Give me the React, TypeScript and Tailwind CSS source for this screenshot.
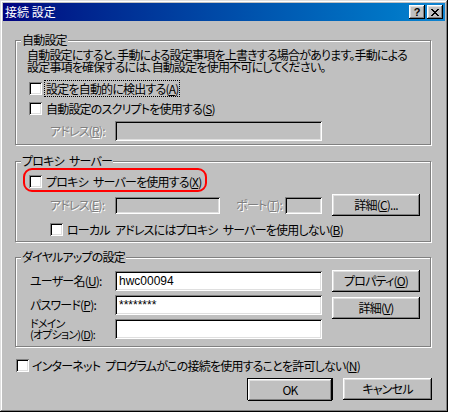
import React from 'react';

const raised =
  'shadow-[inset_-1px_-1px_#000,inset_1px_1px_#fff,inset_-2px_-2px_#808080,inset_2px_2px_#dfdfdf]';
const sunken =
  'shadow-[inset_1px_1px_#808080,inset_-1px_-1px_#fff,inset_2px_2px_#000,inset_-2px_-2px_#dfdfdf]';
const etched = 'border border-[#808080] shadow-[inset_1px_1px_#fff,1px_1px_#fff]';
const dim = 'text-[#808080] [text-shadow:1px_1px_#fff]';
const sp = '\u2002';

// mnemonic like (A) with underlined letter
const K = ({ k }: { k: string }) => (
  <>
    (<span className="underline underline-offset-[1px]">{k}</span>)
  </>
);

const Box = () => <span className={`block w-[13px] h-[13px] shrink-0 bg-white ${sunken}`} />;

const Btn = ({ children, className = '' }: { children: React.ReactNode; className?: string }) => (
  <button className={`h-[22px] shrink-0 bg-[#c0c0c0] ${raised} leading-[22px] text-center ${className}`}>
    {children}
  </button>
);

const Group = ({ title, className = '', children }: { title: string; className?: string; children: React.ReactNode }) => (
  <fieldset className={`w-[416px] ${etched} ${className}`}>
    <legend className="ml-[5px] px-[1px] leading-[14px] bg-[#c0c0c0]">{title}</legend>
    {children}
  </fieldset>
);

export default function App() {
  return (
    <div className="w-[455px] h-[420px] bg-white font-['Noto_Sans_CJK_JP','Noto_Sans_CJK_SC',sans-serif] [font-feature-settings:'palt'] text-[12px] tracking-[-0.8px] text-black">
      <div className="w-[448px] h-[412px] bg-[#c0c0c0] p-[3px] shadow-[inset_-1px_-1px_#000,inset_1px_1px_#dfdfdf,inset_-2px_-2px_#808080,inset_2px_2px_#fff]">
        {/* title bar */}
        <div className="h-[18px] flex items-center bg-gradient-to-r from-[#000080] to-[#1084d0] pl-[2px] pr-[2px]">
          <span className="text-white text-[12px] leading-[18px] tracking-normal whitespace-nowrap">接続 設定</span>
          <div className="ml-auto flex gap-[2px]">
            <span className={`w-[16px] h-[14px] bg-[#c0c0c0] ${raised} flex items-center justify-center text-[11px] font-bold leading-none tracking-normal font-['Liberation_Sans',sans-serif]`}>
              ?
            </span>
            <span className={`w-[16px] h-[14px] bg-[#c0c0c0] ${raised} flex items-center justify-center`}>
              <svg width="8" height="7" viewBox="0 0 8 7" shapeRendering="crispEdges">
                <path d="M0 0h2v1h-2zM6 0h2v1h-2zM1 1h2v1h-2zM5 1h2v1h-2zM2 2h4v1h-4zM3 3h2v1h-2zM2 4h4v1h-4zM1 5h2v1h-2zM5 5h2v1h-2zM0 6h2v1h-2zM6 6h2v1h-2z" fill="#000" />
              </svg>
            </span>
          </div>
        </div>

        <div className="pl-[12px]">
          {/* 自動設定 */}
          <Group title="自動設定" className="mt-[12px]">
            <div className="pb-[3px]">
              <p className="ml-[11px] mt-[2px] leading-[12px] whitespace-nowrap">
                自動設定にすると、手動による設定事項を上書きする場合があります。手動による
                <br />
                設定事項を確保するには、自動設定を使用不可にしてください。
              </p>
              <div className="mt-[7px] ml-[13px] flex items-center h-[17px]">
                <Box />
                <span className="ml-[3px] px-[1px] leading-[15px] outline outline-1 outline-dotted outline-black whitespace-nowrap">
                  設定を自動的に検出する<K k="A" />
                </span>
              </div>
              <div className="mt-[3px] ml-[13px] flex items-center h-[17px]">
                <Box />
                <span className="ml-[4px] whitespace-nowrap">
                  自動設定のスクリプトを使用する<K k="S" />
                </span>
              </div>
              <div className="mt-[4px] flex items-center h-[20px]">
                <span className={`ml-[34px] w-[65px] shrink-0 whitespace-nowrap ${dim}`}>
                  アドレス<K k="R" />:
                </span>
                <div className={`w-[207px] h-[20px] ${sunken}`} />
              </div>
            </div>
          </Group>

          {/* プロキシ サーバー */}
          <Group title={`プロキシ${sp}サーバー`} className="mt-[9px]">
            <div className="pb-[3px]">
              <div className="ml-[7px] w-[184px] h-[24px] flex items-center border-2 border-[#ff0000] rounded-[9px] pl-[4px] pt-[3px]">
                <Box />
                <span className="ml-[4px] whitespace-nowrap">
                  プロキシ{sp}サーバーを使用する<K k="X" />
                </span>
              </div>
              <div className="mt-[2px] flex items-center h-[22px]">
                <span className={`ml-[34px] w-[65px] shrink-0 whitespace-nowrap ${dim}`}>
                  アドレス<K k="E" />:
                </span>
                <div className={`w-[105px] h-[17px] shrink-0 ${sunken}`} />
                <div className="w-[65px] shrink-0 flex justify-end pr-[3px]">
                  <span className={`whitespace-nowrap ${dim}`}>
                    ポート<K k="T" />:
                  </span>
                </div>
                <div className={`w-[37px] h-[17px] shrink-0 ${sunken}`} />
                <Btn className="ml-[10px] w-[88px]">
                  詳細<K k="C" />...
                </Btn>
              </div>
              <div className="mt-[5px] ml-[34px] flex items-center h-[17px]">
                <Box />
                <span className="ml-[4px] whitespace-nowrap">
                  ローカル{sp}アドレスにはプロキシ{sp}サーバーを使用しない<K k="B" />
                </span>
              </div>
            </div>
          </Group>

          {/* ダイヤルアップの設定 */}
          <Group title="ダイヤルアップの設定" className="mt-[8px]">
            <div className="mt-[6px] pb-[7px] flex">
              <div className="ml-[14px] pt-[1px] flex flex-col gap-[4px]">
                <div className="flex items-center h-[20px]">
                  <span className="w-[85px] shrink-0 whitespace-nowrap">
                    ユーザー名<K k="U" />:
                  </span>
                  <div className={`w-[207px] h-[20px] bg-white ${sunken} pl-[4px] leading-[20px] tracking-normal font-['Liberation_Sans',sans-serif] text-[12px]`}>
                    hwc00094
                  </div>
                </div>
                <div className="flex items-center h-[20px]">
                  <span className="w-[85px] shrink-0 whitespace-nowrap">
                    パスワード<K k="P" />:
                  </span>
                  <div className={`w-[207px] h-[20px] bg-white ${sunken} pl-[4px] leading-[20px] tracking-normal font-['Liberation_Sans',sans-serif] text-[12px]`}>
                    ********
                  </div>
                </div>
                <div className="flex items-center h-[20px]">
                  <span className="w-[85px] shrink-0 whitespace-nowrap text-[11px] leading-[11px]">
                    ドメイン
                    <br />
                    (オプション)<K k="D" />:
                  </span>
                  <div className={`w-[207px] h-[20px] bg-white ${sunken}`} />
                </div>
              </div>
              <div className="ml-[10px] flex flex-col gap-[5px]">
                <Btn className="w-[88px]">
                  プロパティ<K k="O" />
                </Btn>
                <Btn className="w-[88px]">
                  詳細<K k="V" />
                </Btn>
              </div>
            </div>
          </Group>

          <div className="mt-[10px] ml-[1px] flex items-center h-[17px]">
            <Box />
            <span className="ml-[3px] whitespace-nowrap">
              インターネット{sp}プログラムがこの接続を使用することを許可しない<K k="N" />
            </span>
          </div>

          <div className="mt-[4px] flex">
            <div className="ml-[232px] w-[86px] h-[22px] border border-black">
              <Btn className="w-[84px] h-[20px] leading-[20px] block">OK</Btn>
            </div>
            <Btn className="ml-[10px] w-[89px]">キャンセル</Btn>
          </div>
        </div>
      </div>
    </div>
  );
}
